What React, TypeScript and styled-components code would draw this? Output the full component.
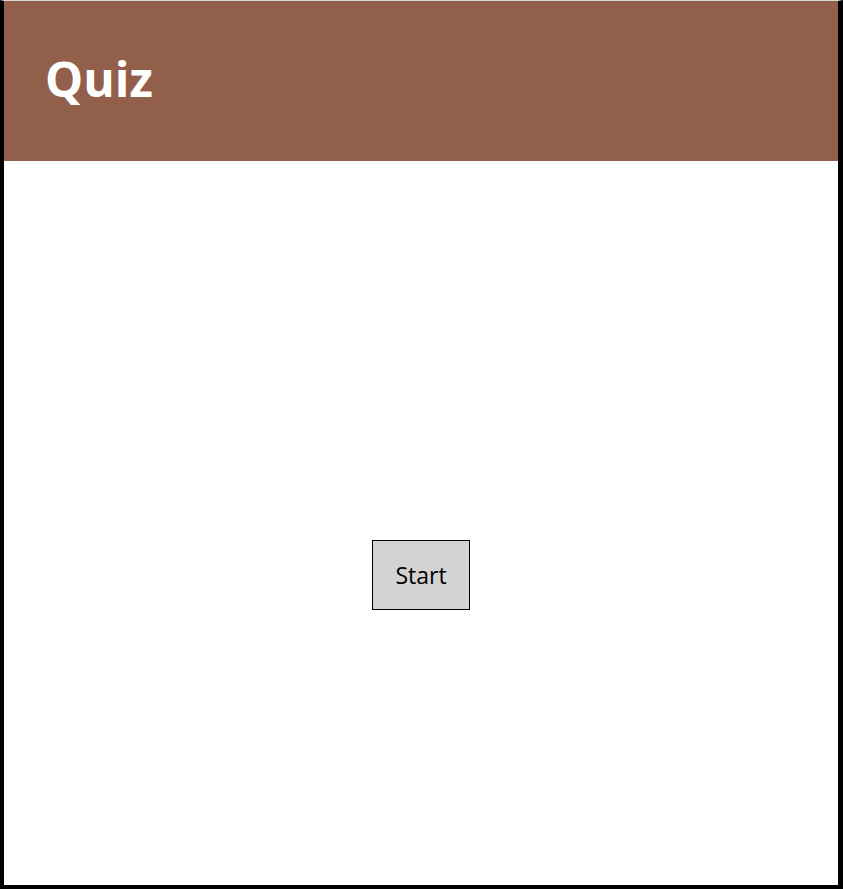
import React from "react";
import styled, { createGlobalStyle } from "styled-components";

const Global = createGlobalStyle`
  html, body {
    margin: 0;
    padding: 0;
    background: #000;
  }
  #root {
    height: 889px;
  }
`;

const Frame = styled.div`
  box-sizing: border-box;
  height: 889px;
  border-top: 1px solid #d8d8d8;
  border-left: 4px solid #000;
  border-right: 5px solid #000;
  border-bottom: 4px solid #000;
  background: #fff;
  display: flex;
  flex-direction: column;
`;

const Header = styled.header`
  box-sizing: border-box;
  height: 160px;
  background: #925f4a;
  padding: 45px 0 0 41px;
`;

const Title = styled.h1`
  margin: 0;
  font-family: "Open Sans", "DejaVu Sans", sans-serif;
  font-weight: 700;
  font-size: 48px;
  color: #fff;
  letter-spacing: 0;
`;

const Main = styled.main`
  flex: 1;
  display: flex;
  justify-content: center;
  align-items: flex-start;
  padding-top: 379px;
`;

const StartButton = styled.button`
  box-sizing: border-box;
  width: 98px;
  height: 70px;
  background: #d3d3d3;
  border: 1px solid #000;
  border-radius: 0;
  font-family: "Open Sans", "DejaVu Sans", sans-serif;
  font-size: 23px;
  color: #000;
  padding: 0;
  cursor: pointer;
`;

export default function App() {
  return (
    <>
      <Global />
      <Frame>
        <Header>
          <Title>Quiz</Title>
        </Header>
        <Main>
          <StartButton>Start</StartButton>
        </Main>
      </Frame>
    </>
  );
}
